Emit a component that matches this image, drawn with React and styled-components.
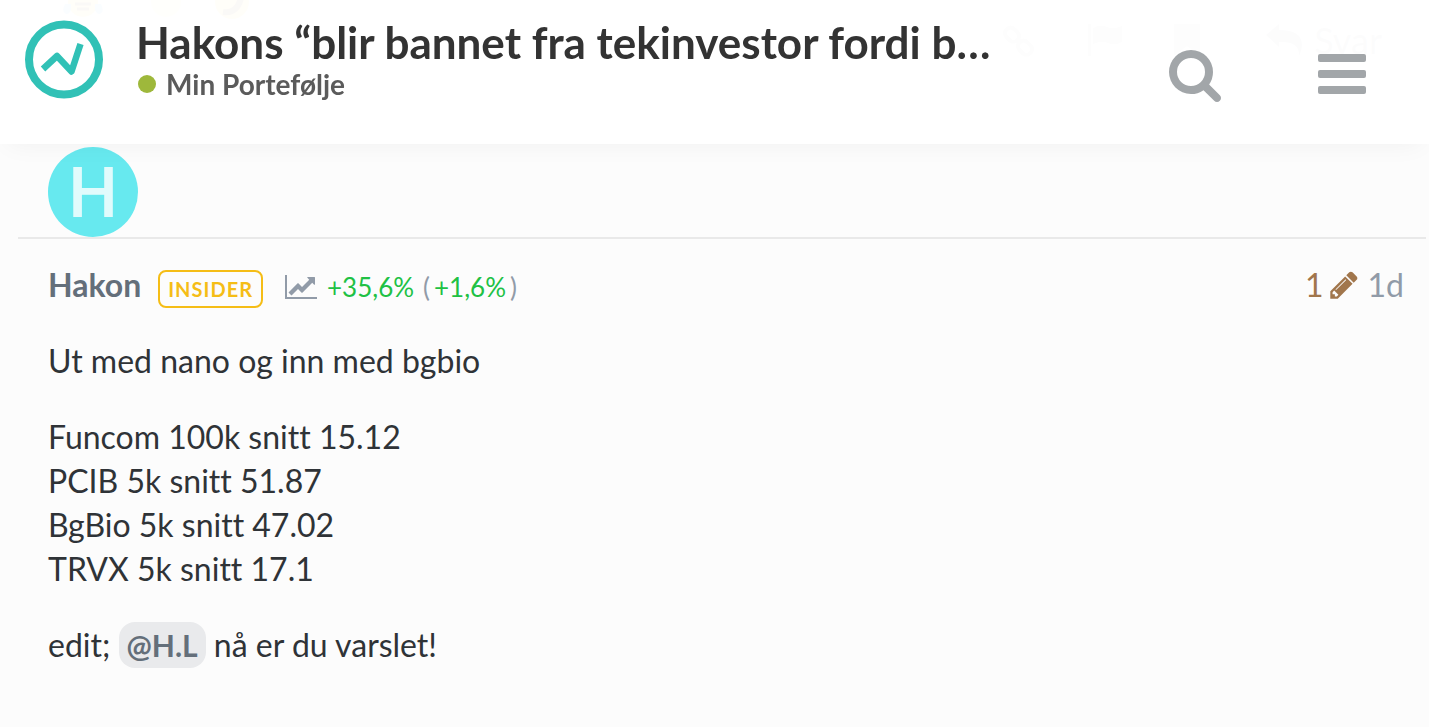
import styled, { createGlobalStyle } from "styled-components";

const holdings = [
  "Funcom 100k snitt 15.12",
  "PCIB 5k snitt 51.87",
  "BgBio 5k snitt 47.02",
  "TRVX 5k snitt 17.1",
];

function SearchIcon() {
  return (
    <Icon $size={56} viewBox="0 0 1792 1792" aria-hidden="true">
      <path d="M1216 832q0-185-131.5-316.5t-316.5-131.5-316.5 131.5-131.5 316.5 131.5 316.5 316.5 131.5 316.5-131.5 131.5-316.5zm512 832q0 52-38 90t-90 38q-54 0-90-38l-343-342q-179 124-399 124-143 0-273.5-55.5t-225-150-150-225-55.5-273.5 55.5-273.5 150-225 225-150 273.5-55.5 273.5 55.5 225 150 150 225 55.5 273.5q0 220-124 399l343 343q37 37 37 90z" />
    </Icon>
  );
}

function BarsIcon() {
  return (
    <Icon $size={56} viewBox="0 0 1792 1792" aria-hidden="true">
      <rect x="128" y="256" width="1536" height="256" rx="64" />
      <rect x="128" y="768" width="1536" height="256" rx="64" />
      <rect x="128" y="1280" width="1536" height="256" rx="64" />
    </Icon>
  );
}

function PencilIcon() {
  return (
    <Icon $size={32} viewBox="0 0 1792 1792" aria-hidden="true">
      <path d="M491 1536l91-91-235-235-91 91v107h128v128h107zm523-928q0-22-22-22-10 0-17 7l-542 542q-7 7-7 17 0 22 22 22 10 0 17-7l542-542q7-7 7-17zm-54-192l416 416-832 832h-416v-416zm683 96q0 53-37 90l-166 166-416-416 166-165q36-38 90-38 53 0 91 38l235 234q37 39 37 91z" />
    </Icon>
  );
}

function ChartIcon() {
  return (
    <Icon $size={32} viewBox="0 0 2048 1792" aria-hidden="true">
      <path d="M2048 1536v128h-2048v-1536h128v1408h1920zm-128-1248v435q0 21-19.5 29.5t-35.5-7.5l-121-121-633 633q-10 10-23 10t-23-10l-233-233-416 416-192-192 585-585q10-10 23-10t23 10l233 233 464-464-121-121q-16-16-7.5-35.5t29.5-19.5h435q14 0 23 9t9 23z" />
    </Icon>
  );
}

function Logo() {
  return (
    <svg width="80" height="80" viewBox="0 0 80 80" aria-hidden="true">
      <circle cx="40" cy="39.500" r="35" fill="none" stroke="#31c1b6" strokeWidth="8" />
      <path
        d="M19 49L33 36L47.500 51.500L56.500 24"
        fill="none"
        stroke="#31c1b6"
        strokeWidth="6.500"
        strokeLinejoin="round"
      />
    </svg>
  );
}

function App() {
  return (
    <>
      <GlobalStyle />
      <Header>
        <LogoLink href="/" aria-label="Tekinvestor">
          <Logo />
        </LogoLink>
        <TopicInfo>
          <Title>Hakons “blir bannet fra tekinvestor fordi b…</Title>
          <Category href="/c/min-portefolje">
            <CategoryDot />
            Min Portefølje
          </Category>
        </TopicInfo>
        <HeaderButtons>
          <HeaderButton type="button" aria-label="Søk">
            <SearchIcon />
          </HeaderButton>
          <HeaderButton type="button" aria-label="Meny">
            <BarsIcon />
          </HeaderButton>
        </HeaderButtons>
      </Header>

      <Stream>
        {/* end of the previous post, shows faintly through the header */}
        <PreviousPost>
          <Emojis width="190" height="20" viewBox="0 0 190 20" aria-hidden="true">
            <circle cx="20" cy="2" r="15" fill="#ffcc4d" />
            <path d="M12 4h16M14 9h12" stroke="#664500" strokeWidth="3" />
            <path d="M2 4q-4 8 1 10 6 0 5-10zM38 4q4 8-1 10-6 0-5-10z" fill="#5dadec" />
            <circle cx="103" cy="2" r="15" fill="#ffe8a0" />
            <circle cx="169" cy="2" r="17" fill="#ffcc4d" />
            <path d="M160 12q14 2 18-14" fill="none" stroke="#664500" strokeWidth="6" />
          </Emojis>
          <PostActions>
            <svg width="34" height="34" viewBox="0 0 34 34" fill="none" stroke="#b4b4b4" strokeWidth="4" aria-hidden="true">
              <rect x="3" y="5" width="15" height="11" rx="5" transform="rotate(45 10 10)" />
              <rect x="16" y="18" width="15" height="11" rx="5" transform="rotate(45 23 23)" />
            </svg>
            <svg width="34" height="32" viewBox="0 0 34 32" fill="#b4b4b4" aria-hidden="true">
              <path d="M0 0h3v32h-3zM5 4q8-4 14-1t15-1v16q-8 4-14 1t-15 1z" />
            </svg>
            <svg width="26" height="32" viewBox="0 0 26 32" fill="#b4b4b4" aria-hidden="true">
              <path d="M0 0h26v32l-13-10-13 10z" />
            </svg>
            <Reply type="button">
              <svg width="36" height="32" viewBox="0 0 36 32" fill="currentColor" aria-hidden="true">
                <path d="M0 11L13 0v6q23 0 23 15 0 5-3 11 1-15-20-14v5z" />
              </svg>
              Svar
            </Reply>
          </PostActions>
        </PreviousPost>

        <Post>
          <Avatar>H</Avatar>
          <PostBody>
            <Meta>
              <Username href="/u/hakon">Hakon</Username>
              <Badge>INSIDER</Badge>
              <Returns>
                <ChartIcon />
                <Gain>+35,6%</Gain>
                <Change>
                  <span>(</span>
                  <Gain>+1,6%</Gain>
                  <span>)</span>
                </Change>
              </Returns>
              <PostInfo>
                <Edits type="button" aria-label="1 redigering">
                  1
                  <PencilIcon />
                </Edits>
                <PostDate href="/t/1">1d</PostDate>
              </PostInfo>
            </Meta>
            <Paragraph>Ut med nano og inn med bgbio</Paragraph>
            <Paragraph>
              {holdings.map((line) => (
                <Line key={line}>{line}</Line>
              ))}
            </Paragraph>
            <Paragraph>
              edit; <Mention href="/u/h.l">@H.L</Mention> nå er du varslet!
            </Paragraph>
          </PostBody>
        </Post>
      </Stream>
    </>
  );
}

const GlobalStyle = createGlobalStyle`
  * {
    box-sizing: border-box;
  }

  body {
    margin: 0;
    background: #fcfcfc;
    color: #2f3337;
    font-family: Lato, "Liberation Sans", sans-serif;
    font-size: 32px;
    font-variant-ligatures: none;
    line-height: 44px;
  }

  a {
    color: inherit;
    text-decoration: none;
  }

  button {
    padding: 0;
    border: none;
    background: none;
    color: inherit;
    font: inherit;
    cursor: pointer;
  }
`;

const Icon = styled.svg`
  display: block;
  flex: none;
  width: ${(props) => props.$size}px;
  fill: currentColor;
`;

const Header = styled.header`
  position: fixed;
  top: 0;
  left: 0;
  right: 0;
  z-index: 1;
  display: flex;
  align-items: flex-start;
  height: 144px;
  padding: 15px 59px 0 24px;
  background: rgba(255, 255, 255, 0.97);
  box-shadow: 0 8px 24px -8px rgba(0, 0, 0, 0.05);
`;

const LogoLink = styled.a`
  flex: none;
  padding-top: 5px;

  svg {
    display: block;
  }
`;

const TopicInfo = styled.div`
  flex: 1;
  min-width: 0;
  padding-left: 32px;
`;

const Title = styled.h1`
  margin: 0;
  color: #333;
  font-size: 44px;
  font-weight: 700;
  line-height: 54px;
  white-space: nowrap;
`;

const Category = styled.a`
  display: flex;
  align-items: center;
  gap: 10px;
  padding-left: 2px;
  color: #5b5b5b;
  font-size: 28px;
  font-weight: 700;
  line-height: 30px;
`;

const CategoryDot = styled.span`
  width: 18px;
  height: 18px;
  border-radius: 50%;
  background: #9eb83b;
`;

const HeaderButtons = styled.div`
  display: flex;
  gap: 91px;
  padding-top: 31px;
  color: #a2a6a9;
`;

const HeaderButton = styled.button`
  display: block;
`;

const Stream = styled.main`
  padding: 0 3px 0 18px;
`;

const PreviousPost = styled.div`
  display: flex;
  justify-content: space-between;
  height: 147px;
  padding: 0 44px 0 45px;
`;

const Emojis = styled.svg`
  flex: none;
`;

const PostActions = styled.div`
  display: flex;
  align-items: flex-start;
  gap: 52px;
  padding-top: 24px;
`;

const Reply = styled.button`
  display: flex;
  align-items: center;
  gap: 12px;
  margin-left: 14px;
  color: #919ba8;
  font-size: 36px;
  line-height: 32px;
`;

const Post = styled.article`
  display: flex;
  flex-direction: column;
`;

const Avatar = styled.div`
  width: 90px;
  height: 90px;
  margin-left: 30px;
  border-radius: 50%;
  background: #67e9ef;
  color: #e1fbfc;
  font-family: Roboto, sans-serif;
  font-size: 70px;
  font-weight: 500;
  line-height: 92px;
  text-align: center;
`;

const PostBody = styled.div`
  padding: 24px 22px 32px 30px;
  border-top: 2px solid #e9e9e9;
`;

const Meta = styled.div`
  display: flex;
  align-items: baseline;
  height: 44px;
  margin-bottom: 32px;
`;

const Username = styled.a`
  color: #646f7a;
  font-weight: 700;
`;

const Badge = styled.span`
  margin-left: 17px;
  padding: 0 8px;
  border: 2px solid #f5bd16;
  border-radius: 8px;
  color: #f5bd16;
  font-size: 20px;
  font-weight: 700;
  letter-spacing: 1px;
  line-height: 34px;
`;

const Returns = styled.span`
  display: flex;
  align-items: baseline;
  margin-left: 22px;
  color: #919ba8;
  font-size: 26px;

  svg {
    align-self: center;
    margin-right: 10px;
  }
`;

const Gain = styled.span`
  color: #20c144;
`;

const Change = styled.span`
  display: flex;
  gap: 4px;
  margin-left: 9px;
`;

const PostInfo = styled.div`
  display: flex;
  align-items: center;
  gap: 8px;
  margin-left: auto;
`;

const Edits = styled.button`
  display: flex;
  align-items: center;
  gap: 4px;
  color: #a1764c;
`;

const PostDate = styled.a`
  color: #919ba8;
`;

const Paragraph = styled.p`
  margin: 0 0 32px;
`;

const Line = styled.span`
  display: block;
`;

const Mention = styled.a`
  padding: 5px 8px;
  border-radius: 16px;
  background: #e9eaec;
  color: #646f7a;
  font-size: 30px;
  font-weight: 700;
`;

export default App;
